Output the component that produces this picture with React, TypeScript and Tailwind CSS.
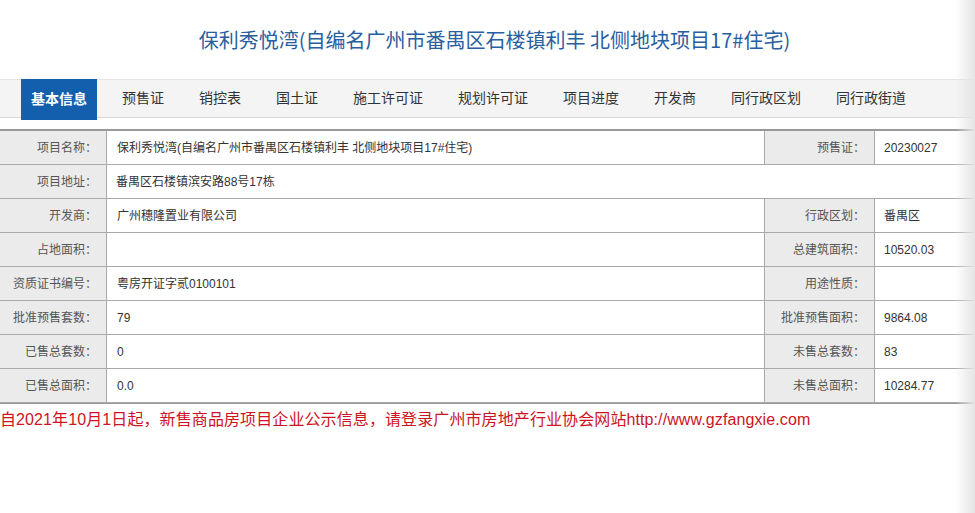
import React from "react";

const font = { fontFamily: '"Liberation Sans", "Noto Sans CJK SC", sans-serif' };

const tabs = ["预售证", "销控表", "国土证", "施工许可证", "规划许可证", "项目进度", "开发商", "同行政区划", "同行政街道"];

type Row = { l1: string; v1: string; l2?: string; v2?: string; span?: boolean };

const rows: Row[] = [
  { l1: "项目名称：", v1: "保利秀悦湾(自编名广州市番禺区石楼镇利丰 北侧地块项目17#住宅)", l2: "预售证：", v2: "20230027" },
  { l1: "项目地址：", v1: "番禺区石楼镇滨安路88号17栋", span: true },
  { l1: "开发商：", v1: "广州穗隆置业有限公司", l2: "行政区划：", v2: "番禺区" },
  { l1: "占地面积：", v1: "", l2: "总建筑面积：", v2: "10520.03" },
  { l1: "资质证书编号：", v1: "粤房开证字贰0100101", l2: "用途性质：", v2: "" },
  { l1: "批准预售套数：", v1: "79", l2: "批准预售面积：", v2: "9864.08" },
  { l1: "已售总套数：", v1: "0", l2: "未售总套数：", v2: "83" },
  { l1: "已售总面积：", v1: "0.0", l2: "未售总面积：", v2: "10284.77" },
];

const labelCls =
  "h-[34px] bg-[#ebebeb] border-b border-r border-[#a9a9a9] flex items-center justify-end pr-[9px] text-[12px] text-[#555]";
const valueCls =
  "h-[34px] bg-white border-b border-r border-[#a9a9a9] flex items-center pl-[10px] text-[12px] text-[#333] whitespace-nowrap overflow-hidden";
const lastValueCls =
  "h-[34px] bg-white border-b border-[#a9a9a9] flex items-center pl-[9px] text-[12px] text-[#333] whitespace-nowrap overflow-hidden";

export default function App() {
  return (
    <div className="relative w-full h-[513px] bg-white overflow-hidden" style={font}>
      <div className="pt-[27px] pl-[14px] text-center">
        <h1 className="text-[20px] leading-[26px] text-[#28609f] whitespace-nowrap" style={{ fontFamily: '"Noto Sans CJK SC", "Liberation Sans", sans-serif' }}>
          保利秀悦湾(自编名广州市番禺区石楼镇利丰 北侧地块项目17#住宅)
        </h1>
      </div>

      <div className="mt-[26px] h-[39px] bg-[#f4f4f4] border-t border-b border-t-[#e4e4e4] border-b-[#d9d9d9] flex items-start pl-[21px]">
        <div className="h-[41px] -mt-px px-[10px] bg-[#135fae] text-white font-bold text-[14px] flex items-center">
          基本信息
        </div>
        <div className="ml-[25px] flex gap-[35px] h-full items-center">
          {tabs.map((t) => (
            <span key={t} className="text-[14px] text-[#333] whitespace-nowrap">
              {t}
            </span>
          ))}
        </div>
      </div>

      <div className="mt-[11px] grid grid-cols-[107px_658px_110px_1fr] border-t-2 border-b border-[#999]">
        {rows.map((r, i) =>
          r.span ? (
            <React.Fragment key={i}>
              <div className={labelCls}>{r.l1}</div>
              <div className={`${lastValueCls} col-span-3`}>{r.v1}</div>
            </React.Fragment>
          ) : (
            <React.Fragment key={i}>
              <div className={labelCls}>{r.l1}</div>
              <div className={valueCls}>{r.v1}</div>
              <div className={labelCls}>{r.l2}</div>
              <div className={lastValueCls}>{r.v2}</div>
            </React.Fragment>
          )
        )}
      </div>

      <p className="mt-[4px] text-[16px] leading-[24px] tracking-[0.1px] text-[#cc1424] whitespace-nowrap">
        自2021年10月1日起，新售商品房项目企业公示信息，请登录广州市房地产行业协会网站http://www.gzfangxie.com
      </p>

      <div className="pointer-events-none absolute top-0 right-0 h-full w-[20px] bg-gradient-to-r from-transparent to-[#e4e4e4]" />
    </div>
  );
}
